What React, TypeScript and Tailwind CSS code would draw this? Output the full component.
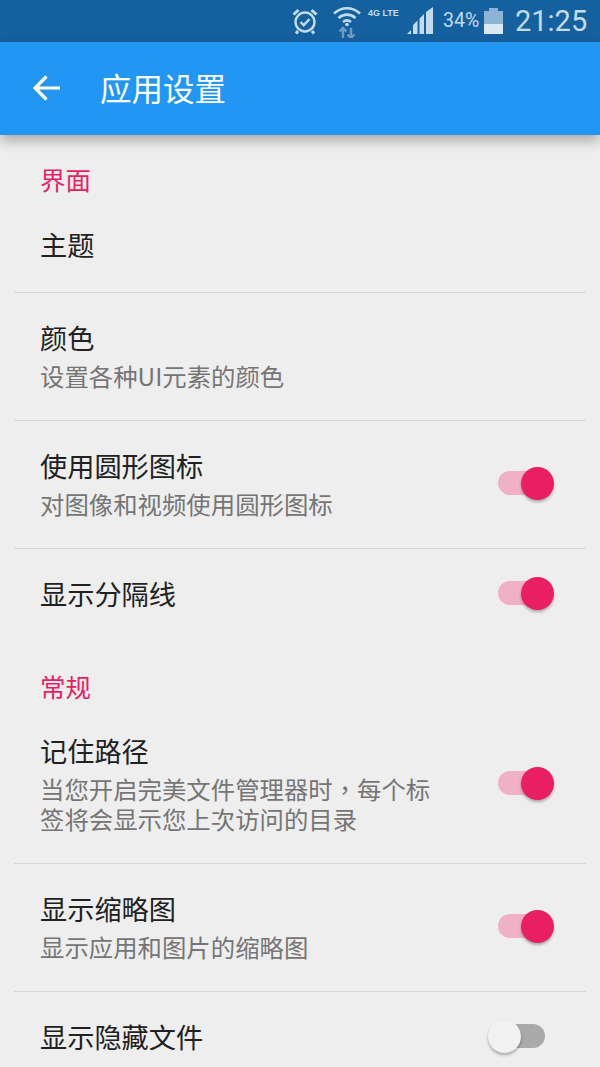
import React from "react";

const cjk = "font-['Noto_Sans_CJK_SC','Noto_Sans',sans-serif]";

function Toggle({ on }: { on: boolean }) {
  return (
    <div className="relative mr-[41px] h-[24px] w-[47px] shrink-0">
      <div className={`h-full w-full rounded-full ${on ? "bg-[#f0b1c7]" : "bg-[#a9a9a9]"}`} />
      <div
        className={`absolute top-[-4px] h-[33px] w-[33px] rounded-full shadow-[0_2px_3px_rgba(0,0,0,0.3)] ${
          on ? "right-[-9px] bg-[#e91e63]" : "left-[-10px] bg-[#f1f1f1]"
        }`}
      />
    </div>
  );
}

function Row({
  title,
  sub,
  toggle,
  last,
  subFont = "",
}: {
  title: string;
  sub?: string;
  toggle?: boolean;
  last?: boolean;
  subFont?: string;
}) {
  return (
    <div className={`mx-[14px] flex shrink-0 items-center pt-[26px] pb-[30px] pl-[26px] ${last ? "" : "border-b border-[#d8d8d8]"}`}>
      <div className="min-w-0 flex-1">
        <div className="h-[36px] text-[27.2px] leading-[36px] text-[#212121]">{title}</div>
        {sub && (
          <div className={`mt-[6px] mb-[-1px] w-[400px] text-[24.4px] leading-[30px] text-[#757575] ${subFont}`}>{sub}</div>
        )}
      </div>
      {toggle !== undefined && <Toggle on={toggle} />}
    </div>
  );
}

function Section({ label, top }: { label: string; top: string }) {
  return (
    <div className={`h-[65px] shrink-0 pl-[40px] text-[25.5px] leading-[36px] text-[#e91e63] ${top}`}>{label}</div>
  );
}

function StatusBar() {
  return (
    <div className="flex h-[42px] shrink-0 items-center bg-[#15609e] pl-[290px] text-[#c3dbee]">
      <svg width="30" height="30" viewBox="0 0 30 30" fill="none" stroke="currentColor" strokeWidth="2.4">
        <circle cx="15" cy="16" r="9.5" />
        <path d="M10.5 16l3.2 3.2 5.8-6" />
        <path d="M3.5 8.5l5-4.5M26.5 8.5l-5-4.5M8 25l-2 2.5M22 25l2 2.5" strokeWidth="3" />
      </svg>
      <svg className="ml-[12px]" width="30" height="34" viewBox="0 0 30 34" fill="none" stroke="currentColor">
        <path d="M2 9.5c7.5-7 18.5-7 26 0" strokeWidth="2.6" />
        <path d="M6.5 14c5-4.5 12-4.5 17 0" strokeWidth="2.6" />
        <path d="M11 18c2.5-2 5.5-2 8 0" strokeWidth="2.6" />
        <circle cx="15" cy="20.5" r="1.8" fill="currentColor" stroke="none" />
        <path d="M11 34v-10M7.5 27.500l3.500-3.500 3.500 3.500M19 24v10M15.500 30.500l3.500 3.500 3.500-3.500" stroke="#6f9cc3" strokeWidth="2.4" />
      </svg>
      <div className="ml-[6px] h-[24px] w-[33px] self-start pt-[8px] font-['Liberation_Sans',sans-serif] text-[9px] leading-[11px] font-bold whitespace-nowrap">
        4G LTE
      </div>
      <svg className="ml-[5px] mt-[-1px]" width="28" height="28" viewBox="0 0 28 28" fill="currentColor">
        <path d="M1 27l4-4v4zM7 27v-9l4.5-4.5V27zM13.5 27V11.5L18 7v20zM20 27V5l7-5v27z" />
      </svg>
      <div className="ml-[9px] w-[38px] font-['Roboto',sans-serif] text-[19.5px] leading-[42px] whitespace-nowrap">34%</div>
      <svg className="ml-[2px]" width="21" height="26" viewBox="0 0 21 26">
        <path d="M6 0h9v3h5v23H1V3h5z" fill="#8db4d4" />
        <path d="M1 16h19v10H1z" fill="#dbe8f3" />
      </svg>
      <div className="ml-[11px] font-['Roboto',sans-serif] text-[29px] leading-[42px] whitespace-nowrap">21:25</div>
    </div>
  );
}

export default function App() {
  return (
    <div className={`flex h-[1067px] w-[600px] flex-col overflow-hidden bg-[#eeeeee] ${cjk}`}>
      <StatusBar />
      <div className="relative z-10 flex h-[93px] shrink-0 items-center bg-[#2196f3] shadow-[0_6px_12px_rgba(0,0,0,0.28)]">
        <svg className="ml-[32px] mb-[1px]" width="29" height="28" viewBox="0 0 29 28" fill="none" stroke="#ffffff" strokeWidth="3.2">
          <path d="M28 14H3M14.5 2.5L3 14l11.5 11.5" />
        </svg>
        <div className="ml-[39px] mb-[4px] text-[31.5px] leading-[40px] text-white">应用设置</div>
      </div>
      <Section label="界面" top="pt-[26px]" />
      <Row title="主题" />
      <Row title="颜色" sub="设置各种UI元素的颜色" />
      <Row title="使用圆形图标" sub="对图像和视频使用圆形图标" toggle />
      <Row title="显示分隔线" toggle last />
      <Section label="常规" top="pt-[27px]" />
      <Row
        title="记住路径"
        sub="当您开启完美文件管理器时，每个标签将会显示您上次访问的目录"
        subFont="font-['Noto_Sans_CJK_TC',sans-serif]"
        toggle
      />
      <Row title="显示缩略图" sub="显示应用和图片的缩略图" toggle />
      <Row title="显示隐藏文件" toggle={false} last />
    </div>
  );
}
